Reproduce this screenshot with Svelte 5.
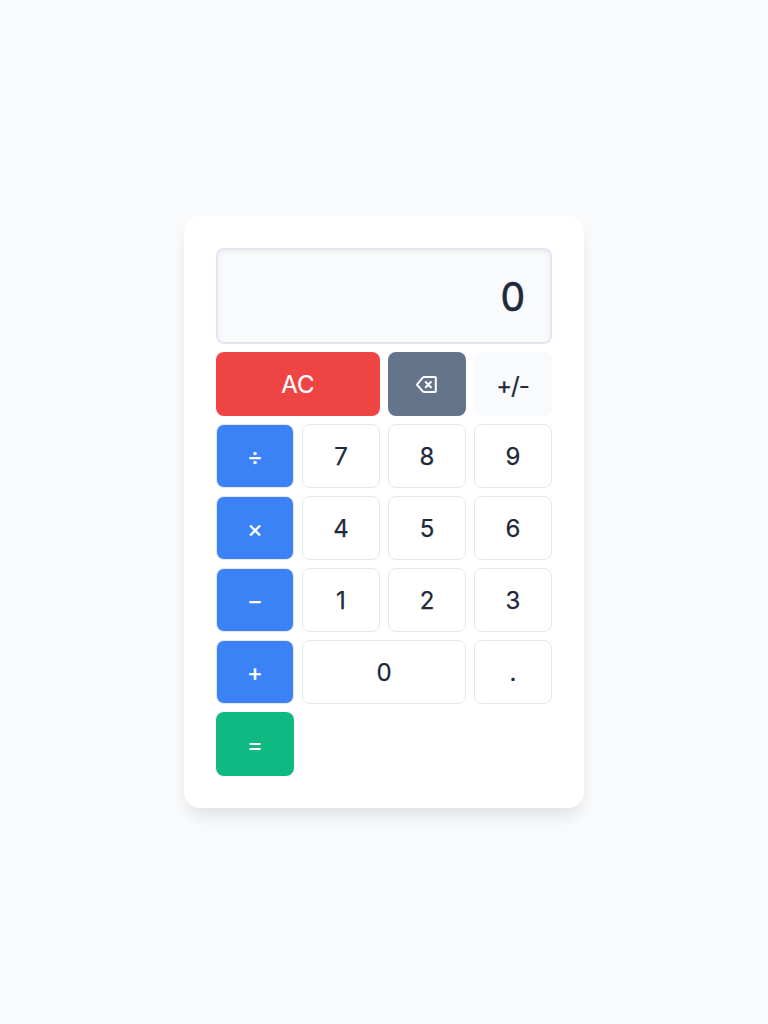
<script>
  const keys = [
    { t: 'AC', c: 'clear wide' },
    { t: '⌫', c: 'back' },
    { t: '+/-', c: 'sign' },
    { t: '÷', c: 'op' }, { t: '7' }, { t: '8' }, { t: '9' },
    { t: '×', c: 'op' }, { t: '4' }, { t: '5' }, { t: '6' },
    { t: '−', c: 'op' }, { t: '1' }, { t: '2' }, { t: '3' },
    { t: '+', c: 'op' }, { t: '0', c: 'wide' }, { t: '.' },
    { t: '=', c: 'equals' }
  ];
</script>

<main>
  <div class="calculator">
    <div class="display">0</div>
    {#each keys as k}
      <button class={k.c ?? ''}>
        {#if k.c === 'back'}
          <svg width="24" height="24" viewBox="0 0 24 24" fill="none" stroke="currentColor" stroke-width="2" stroke-linecap="round" stroke-linejoin="round">
            <path d="M9.2 4.9H20a.8.8 0 0 1 .8.8v13.6a.8.8 0 0 1-.8.8H9.2q-.7 0-1.2-.5L2.3 13.1q-.4-.5 0-1L8 5.4q.5-.5 1.2-.5Z" />
            <path d="m10.7 10 5.2 5.2m0-5.2-5.2 5.2" />
          </svg>
        {:else}{k.t}{/if}
      </button>
    {/each}
  </div>
</main>

<style>
  :global(body) { background: #f8fafc; }
  main {
    min-height: 100vh;
    display: flex;
    align-items: center;
    justify-content: center;
    font-family: Inter, sans-serif;
  }
  .calculator {
    box-sizing: border-box;
    width: 400px;
    padding: 32px;
    background: #fff;
    border-radius: 16px;
    box-shadow: 0 10px 15px -3px rgba(0, 0, 0, 0.1);
    display: grid;
    grid-template-columns: repeat(4, 1fr);
    grid-template-rows: 96px;
    grid-auto-rows: 64px;
    gap: 8px;
  }
  .display {
    grid-column: 1 / -1;
    box-sizing: border-box;
    border: 2px solid #e2e8f0;
    border-radius: 8px;
    background: #f8fafc;
    box-shadow: inset 0 2px 4px rgba(0, 0, 0, 0.05);
    color: #1e293b;
    font-size: 39px;
    -webkit-text-stroke: 0.6px currentColor;
    display: flex;
    align-items: center;
    justify-content: flex-end;
    padding: 0 25px;
  }
  button {
    box-sizing: border-box;
    border: 1px solid #e2e8f0;
    border-radius: 8px;
    background: #fff;
    color: #1e293b;
    font: 400 24px Inter, sans-serif;
    -webkit-text-stroke: 0.25px currentColor;
    padding: 0;
    display: flex;
    align-items: center;
    justify-content: center;
  }
  .wide { grid-column: span 2; }
  .op { background: #3b82f6; color: #fff; }
  .clear { background: #ef4444; color: #fff; border: 0; -webkit-text-stroke-width: 0.15px; }
  .back { background: #64748b; color: #fff; border: 0; }
  .sign { background: #f8fafc; border: 0; letter-spacing: -1px; padding: 2px 1px 0 0; }
  .equals { background: #10b981; color: #fff; border: 0; }
</style>
